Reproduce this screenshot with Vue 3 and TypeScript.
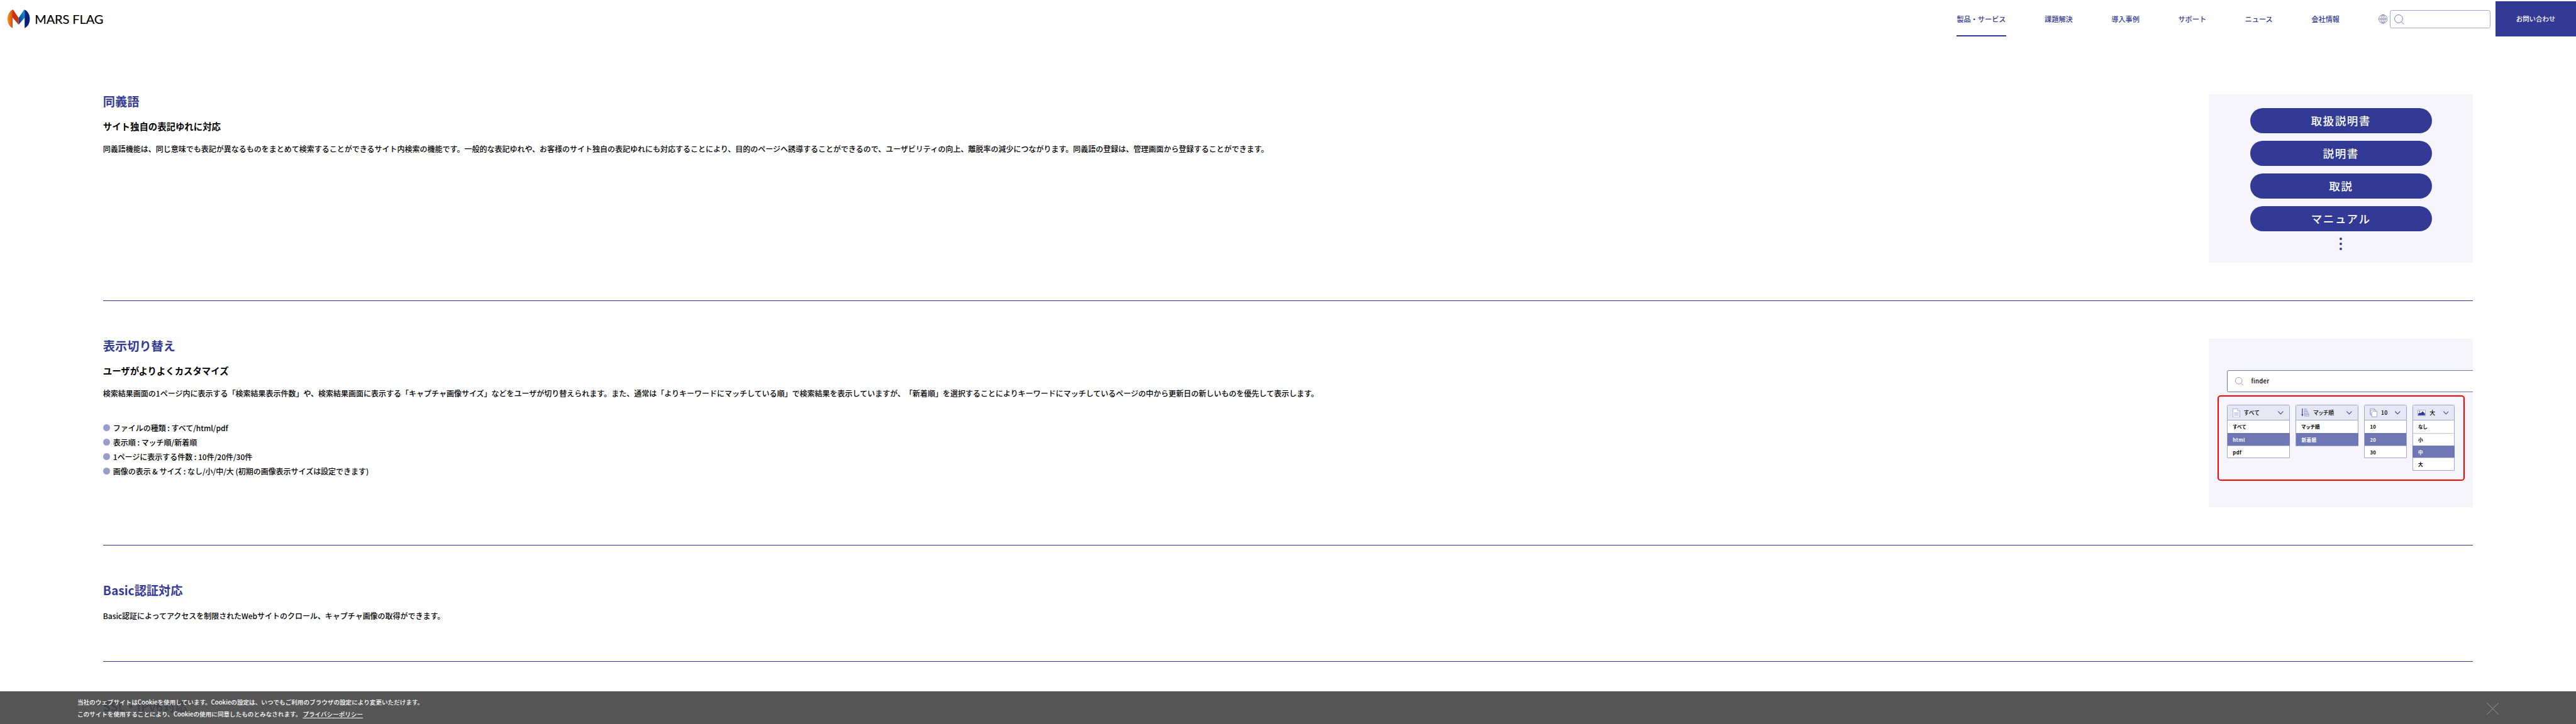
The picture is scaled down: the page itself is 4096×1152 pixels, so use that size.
<script setup lang="ts">
interface MenuRow { label: string; active?: boolean }
interface Menu { kind: string; title: string; wide: boolean; rows: MenuRow[] }

const nav: string[] = ['製品・サービス', '課題解決', '導入事例', 'サポート', 'ニュース', '会社情報']
const synonyms: string[] = ['取扱説明書', '説明書', '取説', 'マニュアル']
const options: string[] = [
  'ファイルの種類 : すべて/html/pdf',
  '表示順 : マッチ順/新着順',
  '1ページに表示する件数 : 10件/20件/30件',
  '画像の表示 & サイズ : なし/小/中/大 (初期の画像表示サイズは設定できます)',
]
const menus: Menu[] = [
  { kind: 'doc', title: 'すべて', wide: true, rows: [{ label: 'すべて' }, { label: 'html', active: true }, { label: 'pdf' }] },
  { kind: 'sort', title: 'マッチ順', wide: true, rows: [{ label: 'マッチ順' }, { label: '新着順', active: true }] },
  { kind: 'pages', title: '10', wide: false, rows: [{ label: '10' }, { label: '20', active: true }, { label: '30' }] },
  { kind: 'image', title: '大', wide: false, rows: [{ label: 'なし' }, { label: '小' }, { label: '中', active: true }, { label: '大' }] },
]
</script>

<template>
  <div class="page">
    <header class="header">
      <a class="logo">
        <svg width="220" height="76" viewBox="0 0 220 76">
          <defs>
            <linearGradient id="lo" x1="0" x2="1"><stop offset="0" stop-color="#eb9a12" /><stop offset="1" stop-color="#dd4a1c" /></linearGradient>
            <linearGradient id="lb" x1="1" y1="0" x2="0" y2="1"><stop offset="0" stop-color="#06a5d9" /><stop offset="0.55" stop-color="#0d63b4" /><stop offset="1" stop-color="#1c2f86" /></linearGradient>
          </defs>
          <path d="M25 56V19.600L26 19L37 35.700V49L25 35Z" fill="#c8320c" />
          <path d="M25 19.500V56C18.500 52.500 15 46 15 37.700S19 22.500 25 19.500Z" fill="url(#lo)" />
          <path d="M48 19L37 35.700V49L49 35V19.500Z" fill="url(#lb)" />
          <path d="M49 19.500C55.500 22.500 59.200 29.500 59.200 37.700S55.500 52.500 49 56Z" fill="#07217a" />
          <text x="69" y="48" textLength="136.500" lengthAdjust="spacing" class="logo-text">MARS FLAG</text>
        </svg>
      </a>
      <nav class="nav">
        <a v-for="(item, i) in nav" :key="item" :class="{ current: i === 0 }">{{ item }}</a>
      </nav>
      <svg class="globe" width="18" height="18" viewBox="0 0 18 18" fill="none" stroke="#525aa6" stroke-width="0.900">
        <circle cx="9" cy="9" r="8.400" /><ellipse cx="9" cy="9" rx="4" ry="8.400" /><path d="M9 .6V17.400M.6 9H17.400" />
      </svg>
      <div class="search">
        <svg width="20" height="20" viewBox="0 0 20 20" fill="none" stroke="#5f67ad" stroke-width="1.100">
          <circle cx="8.700" cy="8.700" r="8" /><path d="M14.300 14.500L19.500 19.500" />
        </svg>
      </div>
      <a class="contact">お問い合わせ</a>
    </header>

    <main class="main">
      <section class="block">
        <div class="copy">
          <h2>同義語</h2>
          <h3>サイト独自の表記ゆれに対応</h3>
          <p>同義語機能は、同じ意味でも表記が異なるものをまとめて検索することができるサイト内検索の機能です。一般的な表記ゆれや、お客様のサイト独自の表記ゆれにも対応することにより、目的のページへ誘導することができるので、ユーザビリティの向上、離脱率の減少につながります。同義語の登録は、管理画面から登録することができます。</p>
        </div>
        <div class="panel pills">
          <div v-for="word in synonyms" :key="word" class="pill">{{ word }}</div>
          <div class="dots"><i></i><i></i><i></i></div>
        </div>
      </section>

      <section class="block">
        <div class="copy">
          <h2>表示切り替え</h2>
          <h3>ユーザがよりよくカスタマイズ</h3>
          <p>検索結果画面の1ページ内に表示する「検索結果表示件数」や、検索結果画面に表示する「キャプチャ画像サイズ」などをユーザが切り替えられます。また、通常は「よりキーワードにマッチしている順」で検索結果を表示していますが、「新着順」を選択することによりキーワードにマッチしているページの中から更新日の新しいものを優先して表示します。</p>
          <ul>
            <li v-for="o in options" :key="o"><span class="bullet"></span>{{ o }}</li>
          </ul>
        </div>
        <div class="panel finder">
          <div class="field">
            <svg width="17" height="17" viewBox="0 0 17 17" fill="none" stroke="#6f77b5" stroke-width="0.900">
              <circle cx="7.200" cy="7.200" r="6.600" /><path d="M12 12L16.300 16.300" />
            </svg>
            <span>finder</span>
          </div>
          <div class="frame">
            <div v-for="m in menus" :key="m.kind" class="menu" :class="{ wide: m.wide }">
              <div class="menu-head">
                <svg v-if="m.kind === 'doc'" width="15" height="18" viewBox="0 0 15 18" fill="#fff" stroke="#8d93c7" stroke-width="0.900">
                  <path d="M.5 .5H10L14.300 4.800V17.500H.5Z" /><path d="M10 .5V4.800H14.300" /><path d="M3 8.500H12M3 11H12M3 13.500H12" />
                </svg>
                <svg v-else-if="m.kind === 'sort'" width="17" height="16" viewBox="0 0 17 16" fill="#f4f5fb" stroke="#8d93c7" stroke-width="0.900">
                  <path d="M6.500 .5H10.500V3H6.500ZM6.500 3.500H12V6.200H6.500ZM6.500 6.700H13.500V9.300H6.500ZM6.500 9.800H15V12.300H6.500ZM6.500 12.800H16.500V15.300H6.500Z" />
                  <path d="M2.300 0V14" stroke="#323a96" stroke-width="1.500" /><path d="M.3 11.500H4.300L2.300 15.500Z" fill="#323a96" stroke="none" />
                </svg>
                <svg v-else-if="m.kind === 'pages'" width="15" height="17" viewBox="0 0 15 17" fill="#fff" stroke="#7f86c0" stroke-width="0.900">
                  <path d="M.5 .5H9.500V11.500H.5Z" /><path d="M2.300 3H11.500V13.500H2.300Z" /><path d="M6.800 5.500H14.500V16.500H4V8.300Z" />
                </svg>
                <svg v-else width="16" height="12" viewBox="0 0 16 12">
                  <rect x=".5" y=".5" width="15" height="11" fill="#fff" stroke="#8d93c7" stroke-width="0.900" />
                  <path d="M1.300 10.800V8L4.500 5.200L6.500 7L10 2.800L14.700 7.500V10.800Z" fill="#323a96" /><circle cx="4.300" cy="3.200" r="1.100" fill="#323a96" />
                </svg>
                <span class="menu-title">{{ m.title }}</span>
                <svg class="chev" width="11" height="7" viewBox="0 0 11 7" fill="none" stroke="#323a96" stroke-width="1.300"><path d="M.5 .7L5.500 6L10.500 .7" /></svg>
              </div>
              <div v-for="r in m.rows" :key="r.label" class="row" :class="{ active: r.active }">{{ r.label }}</div>
            </div>
          </div>
        </div>
      </section>

      <section class="block">
        <div class="copy">
          <h2>Basic認証対応</h2>
          <p class="lead">Basic認証によってアクセスを制限されたWebサイトのクロール、キャプチャ画像の取得ができます。</p>
        </div>
      </section>

      <section class="block">
        <div class="copy"><h2>SSL・IPv6対応</h2></div>
      </section>
    </main>

    <footer class="cookie">
      <div class="cookie-text">
        <div>当社のウェブサイトはCookieを使用しています。Cookieの設定は、いつでもご利用のブラウザの設定により変更いただけます。</div>
        <div>このサイトを使用することにより、Cookieの使用に同意したものとみなされます。 <a>プライバシーポリシー</a></div>
      </div>
      <svg class="close" width="24" height="24" viewBox="0 0 24 24" stroke="#9c9c9c" stroke-width="1.200"><path d="M.3 .3L23.700 23.700M23.700 .3L.3 23.700" /></svg>
    </footer>
  </div>
</template>

<style>
html, body { margin: 0; overflow: hidden; background: #fff; }
</style>

<style scoped>
.page {
  zoom: 0.8;
  position: relative;
  width: 5120px;
  height: 1440px;
  overflow: hidden;
  background: #fff;
  color: #000;
  font-family: "Noto Sans CJK JP", "Noto Sans", sans-serif;
  font-weight: 500;
  text-spacing-trim: space-all;
}
.header { display: flex; height: 76px; align-items: flex-start; box-sizing: border-box; }
.logo { display: block; height: 76px; margin-right: auto; }
.logo svg { display: block; }
.logo-text { font-family: Lato, sans-serif; font-weight: 400; font-size: 25px; fill: #000; stroke: #000; stroke-width: 0.2px; }
.nav { display: flex; gap: 76.8px; margin-right: 77px; }
.nav a {
  height: 73px; box-sizing: border-box; font-size: 14px; line-height: 76px;
  color: #323a96; white-space: nowrap; border-bottom: 2.5px solid transparent;
}
.nav a.current { border-color: #323a96; }
.globe { margin: 29px 5px 0 0; flex: none; }
.search {
  width: 200px; height: 36px; margin: 20px 10px 0 0; padding: 7px 0 0 8px; flex: none;
  border: 1px solid #a5a9d2; border-radius: 4px; box-sizing: border-box;
}
.search svg { display: block; }
.contact {
  width: 160px; height: 70px; margin-top: 3px; flex: none; background: #323a96; color: #fff;
  font-size: 13px; line-height: 71px; text-align: center; font-weight: 500;
}

.main { padding: 112px 204.8px 0; }
.block { display: flex; justify-content: space-between; padding-bottom: 75px; border-bottom: 1px solid #323a96; margin-bottom: 75px; }
.copy { white-space: nowrap; }
h2 { margin: 0; font-size: 24px; line-height: 28px; font-weight: 700; color: #323a96; }
h3 { margin: 22px 0 0; font-size: 18px; line-height: 28px; font-weight: 700; }
p { margin: 17px 0 0; font-size: 15px; line-height: 28.5px; }
p.lead { margin-top: 23px; letter-spacing: -0.03px; }
ul { list-style: none; margin: 38px 0 0; padding: 0; }
li { display: flex; align-items: center; height: 29px; font-size: 15px; line-height: 29px; letter-spacing: -0.03px; white-space: pre; }
.bullet { width: 14px; height: 14px; margin-right: 6px; border-radius: 50%; background: #999dcb; }

.panel { width: 525px; height: 335px; flex: none; background: #f5f5fb; overflow: hidden; box-sizing: border-box; }
.pills { display: flex; flex-direction: column; align-items: center; gap: 15px; padding-top: 27px; }
.pill {
  width: 361px; height: 50px; border-radius: 25px; background: #323a96; color: #fff;
  font-size: 22px; line-height: 50px; letter-spacing: 1.8px; text-align: center;
}
.dots { display: flex; flex-direction: column; gap: 5px; margin-top: -3px; }
.dots i { width: 5px; height: 5px; border-radius: 50%; background: #323a96; }

.finder { padding: 62px 0 0 17px; }
.field {
  display: flex; align-items: center; width: 520px; height: 44px; margin-left: 19px; box-sizing: border-box;
  padding-left: 15px; border: 1px solid #7077b6; border-radius: 3px; background: #fff;
}
.field span { margin-left: 15px; font-size: 12px; letter-spacing: 0.3px; line-height: 44px; }
.frame {
  display: flex; align-items: flex-start; gap: 11.700px; width: 491px; height: 170px; margin-top: 6px;
  padding: 16.500px 0 0 17px; box-sizing: border-box; border: 2.500px solid #f00; border-radius: 6px;
}
.menu {
  width: 84px; box-sizing: border-box; border: 1px solid #a0a4d2; border-radius: 3px 3px 0 0;
  background: #fff; flex: none; font-feature-settings: "palt";
}
.menu.wide { width: 124.600px; }
.menu-head {
  display: flex; align-items: center; height: 30.200px; padding: 0 11px 0 9px; background: #e5e7f2;
  border-bottom: 1px solid #a0a4d2; box-sizing: border-box; border-radius: 2px 2px 0 0;
}
.menu-title { margin-left: 8px; font-size: 11px; line-height: 30px; letter-spacing: 0.4px; white-space: nowrap; }
.chev { margin-left: auto; flex: none; }
.row { height: 24.600px; padding-left: 10px; font-size: 9.500px; line-height: 24px; letter-spacing: 0.5px; font-weight: 700; box-sizing: border-box; }
.row + .row { border-top: 1px solid #c3c6e2; }
.row.active { background: #7077b5; color: #fff; margin: 0 -1px; padding-left: 11px; border-top-color: #7077b5; }

.cookie {
  position: absolute; left: 0; right: 0; bottom: 0; height: 65px; display: flex; justify-content: space-between;
  padding: 10px 153.600px 0; box-sizing: border-box; background: rgba(68, 68, 68, 0.9); color: #fff;
  font-size: 12px; line-height: 24px;
}
.cookie a { text-decoration: underline; text-underline-offset: 2px; }
.close { margin-top: 12px; }
</style>
